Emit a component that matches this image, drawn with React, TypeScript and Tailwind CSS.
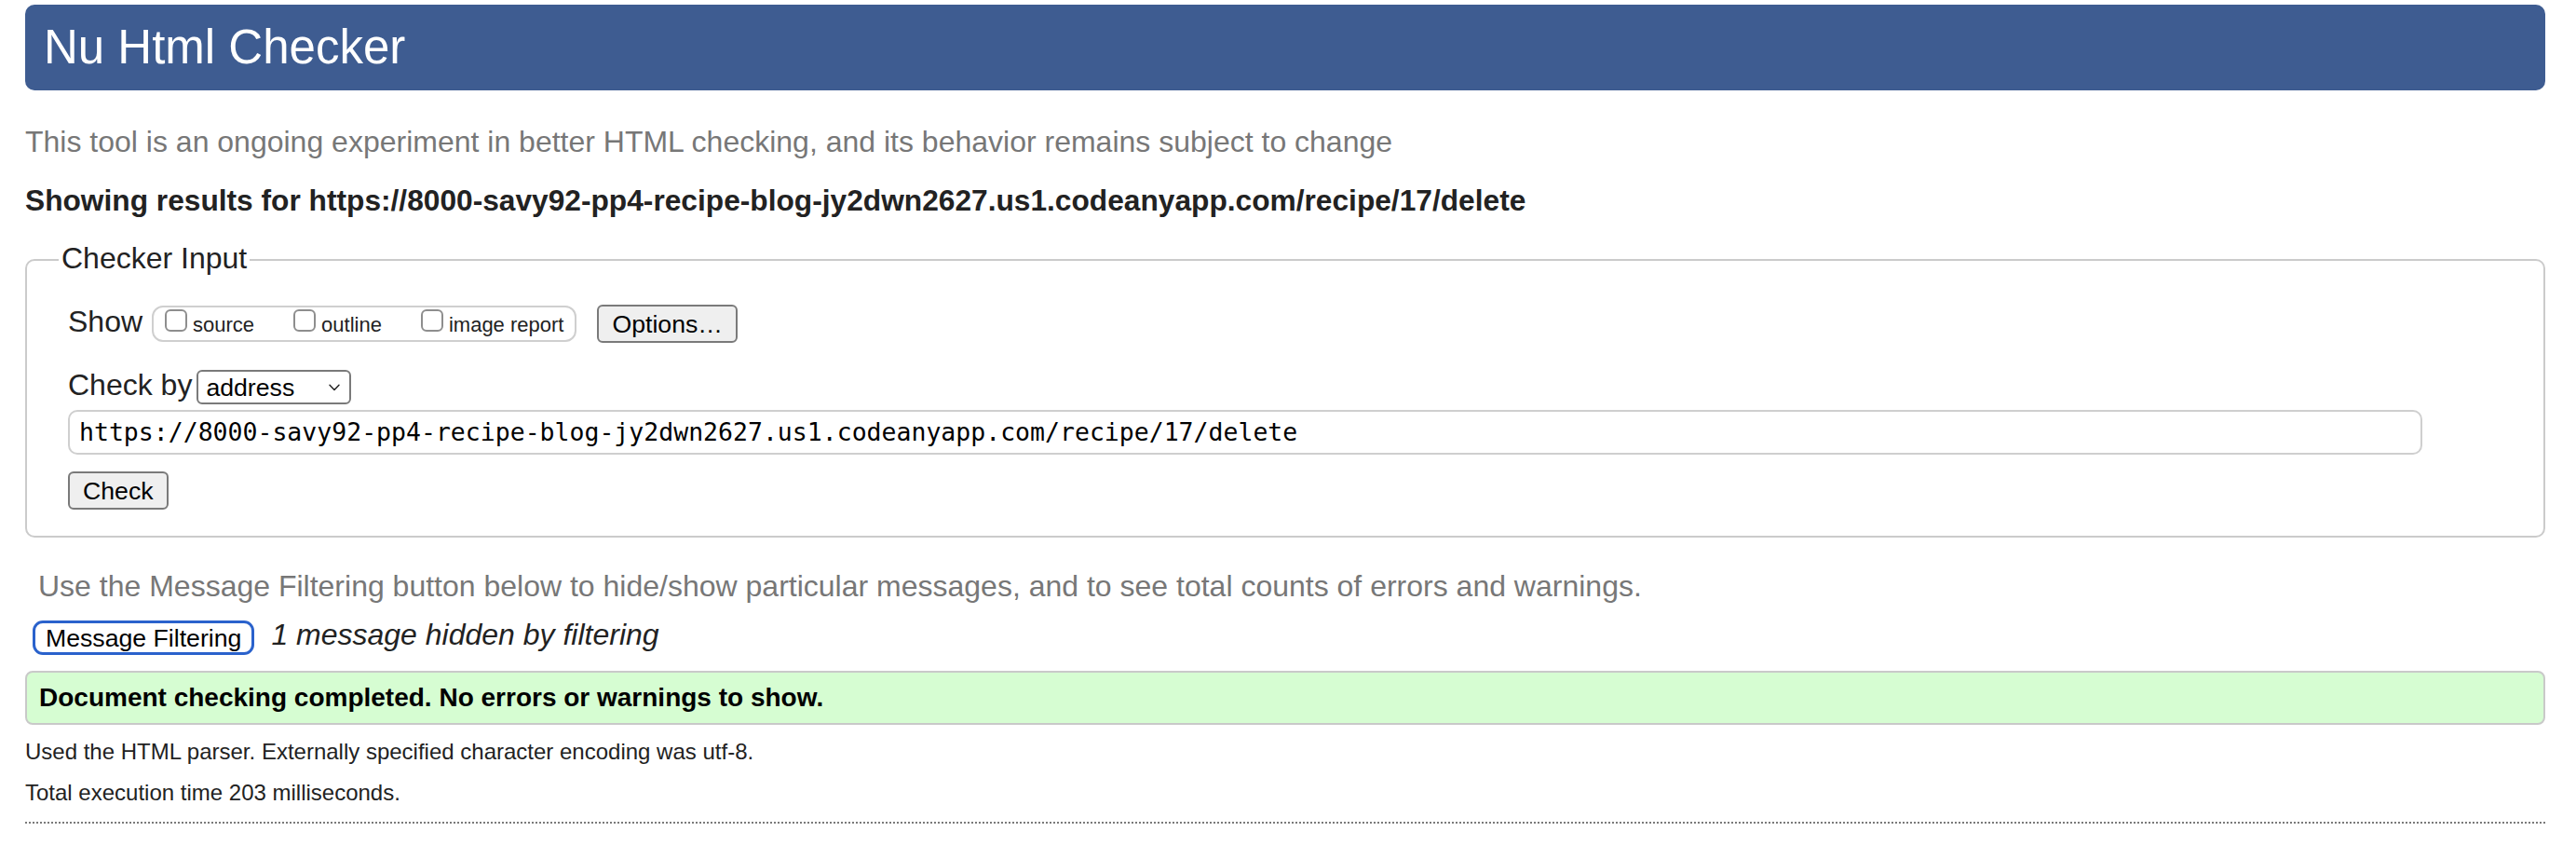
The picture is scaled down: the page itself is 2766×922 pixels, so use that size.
import React from "react";

const sans = "font-['Liberation_Sans',Arial,Helvetica,sans-serif]";
const mono = "font-['DejaVu_Sans_Mono','Liberation_Mono',monospace]";

function Checkbox({ label, last }: { label: string; last?: boolean }) {
  return (
    <label className={`flex items-start ${last ? "" : "mr-[42px]"}`}>
      <span className="mt-[1px] block h-[24px] w-[24px] rounded-[6px] border-2 border-[#8e8e8e] bg-white" />
      <span className="ml-[6px] mt-[6px] text-[22px] leading-[24px] text-[#222]">{label}</span>
    </label>
  );
}

function Chevron() {
  return (
    <svg width="12" height="8" viewBox="0 0 12 8" fill="none" aria-hidden>
      <path d="M1 1.2 6 6.6 11 1.2" stroke="#222" strokeWidth="1.4" strokeLinecap="round" strokeLinejoin="round" />
    </svg>
  );
}

export default function App() {
  const url = "https://8000-savy92-pp4-recipe-blog-jy2dwn2627.us1.codeanyapp.com/recipe/17/delete";

  return (
    <div className={`min-h-[922px] bg-white ${sans}`}>
      <div className="ml-[27px] w-[2706px] pt-[5px]">
        <header className="flex h-[92px] items-center rounded-[10px] bg-[#3e5c91] pl-[20px]">
          <h1 className="text-[51px] font-normal leading-[60px] text-white">Nu Html Checker</h1>
        </header>

        <p className="mt-[35px] text-[32px] leading-[40px] text-[#777]">
          This tool is an ongoing experiment in better HTML checking, and its behavior remains subject to change
        </p>

        <p className="mt-[23px] text-[31.7px] font-bold leading-[40px] text-[#222]">
          Showing results for {url}
        </p>

        <fieldset className="mt-[24px] rounded-[10px] border-2 border-[#cbcbcb] px-[44px] pb-[28px] pt-[28px] text-[#222]">
          <legend className="ml-[-10px] px-[3px] pb-[4px] text-[32px] leading-[36px]">Checker Input</legend>

          <div className="flex h-[41px] items-center">
            <span className="mb-[5px] text-[32px] leading-[40px]">Show</span>
            <div className="ml-[10px] flex h-[39px] items-start rounded-[12px] border-2 border-[#cfcfcf] pl-[12px] pr-[12px] pt-[1px]">
              <Checkbox label="source" />
              <Checkbox label="outline" />
              <Checkbox label="image report" last />
            </div>
            <button
              type="button"
              className="ml-[22px] h-[41px] rounded-[6px] border-2 border-[#7a7a7a] bg-[#efefef] px-[14px] text-[26.67px] leading-[30px] text-black"
            >
              Options…
            </button>
          </div>

          <div className="mt-[29px] flex h-[37px] items-center">
            <span className="mb-[5px] text-[32px] leading-[40px]">Check by</span>
            <div className="ml-[5px] flex h-[37px] w-[166px] items-center justify-between rounded-[6px] border-2 border-[#7a7a7a] bg-white pl-[8px] pr-[10px]">
              <span className="text-[26.67px] leading-[30px] text-black">address</span>
              <Chevron />
            </div>
          </div>

          <div className="mt-[6px] flex h-[48px] w-[2528px] items-center rounded-[10px] border-2 border-[#cfcfcf] bg-white pl-[10px]">
            <span className={`${mono} text-[26.5px] leading-[32px] text-black`}>{url}</span>
          </div>

          <button
            type="button"
            className="mt-[18px] block h-[41px] rounded-[6px] border-2 border-[#7a7a7a] bg-[#efefef] px-[14px] text-[26.67px] leading-[30px] text-black"
          >
            Check
          </button>
        </fieldset>

        <p className="ml-[14px] mt-[32px] text-[32px] leading-[40px] text-[#777]">
          Use the Message Filtering button below to hide/show particular messages, and to see total counts of errors and warnings.
        </p>

        <div className="ml-[8px] mt-[17px] flex h-[37px] items-center">
          <button
            type="button"
            className="h-[37px] rounded-[11px] border-[3px] border-[#2a62cc] bg-white px-[11px] text-[26.67px] leading-[30px] text-black"
          >
            Message Filtering
          </button>
          <span className="mb-[7px] ml-[18px] text-[32px] italic leading-[40px] text-[#222]">
            1 message hidden by filtering
          </span>
        </div>

        <div className="mt-[17px] flex h-[58px] items-center rounded-[8px] border-2 border-[#c9c9c9] bg-[#d6fdd2] pl-[13px]">
          <span className="text-[28px] font-bold leading-[34px] text-black">
            Document checking completed. No errors or warnings to show.
          </span>
        </div>

        <p className="mt-[14px] text-[24px] leading-[30px] text-[#222]">
          Used the HTML parser. Externally specified character encoding was utf-8.
        </p>
        <p className="mt-[14px] text-[24px] leading-[30px] text-[#222]">Total execution time 203 milliseconds.</p>

        <div className="mt-[16px] border-t-2 border-dotted border-[#7a7a7a]" />
      </div>
    </div>
  );
}
